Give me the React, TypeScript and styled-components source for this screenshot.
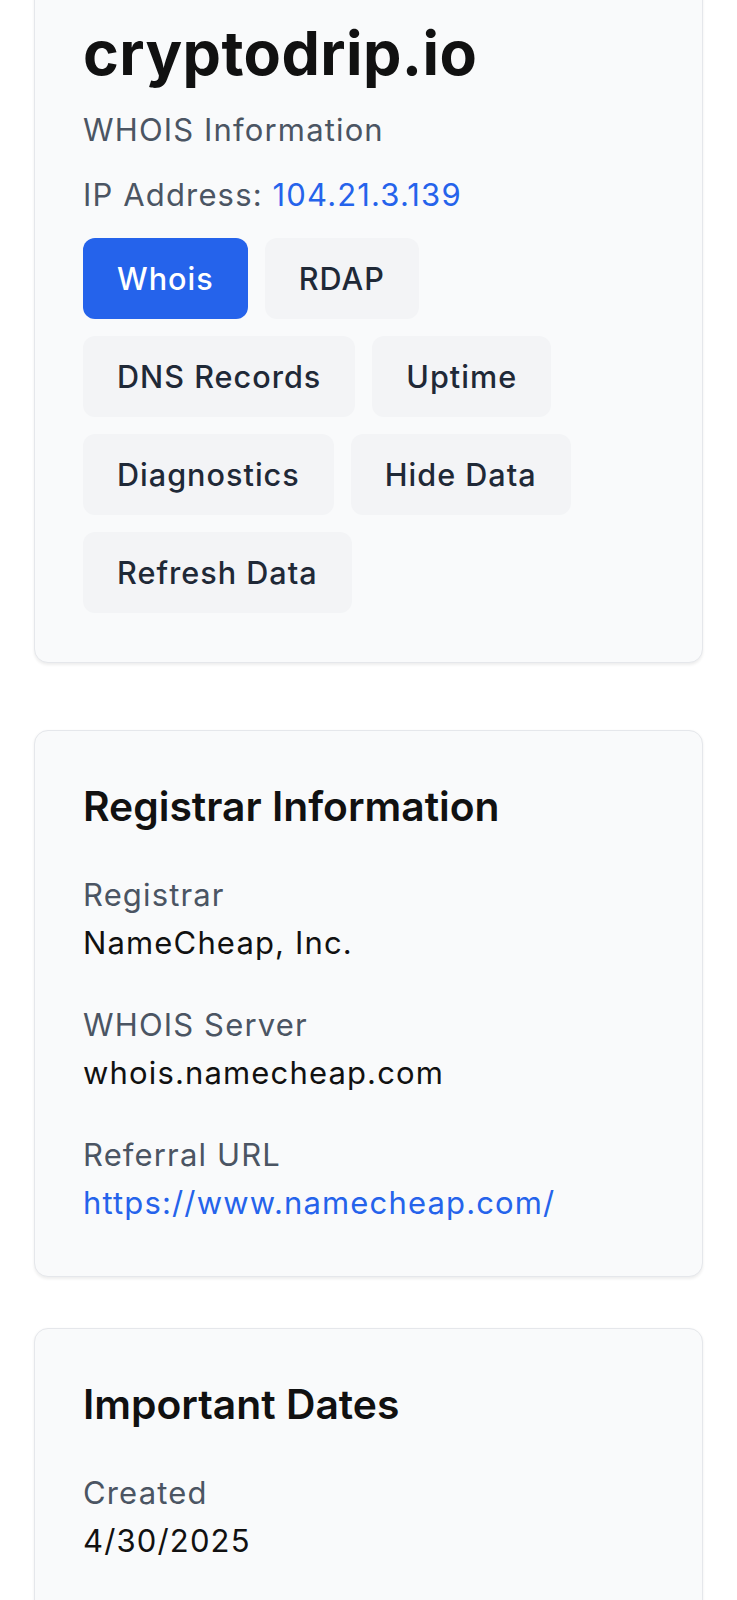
import React from "react";
import styled, { createGlobalStyle } from "styled-components";

const Global = createGlobalStyle`
  html, body {
    margin: 0;
    padding: 0;
    background: #ffffff;
    font-family: Inter, "Noto Sans", "Liberation Sans", sans-serif;
    -webkit-font-smoothing: antialiased;
  }
  * { box-sizing: border-box; }
`;

const Page = styled.main`
  margin-top: -30px;
  padding: 0 34px;
  display: flex;
  flex-direction: column;
`;

const Card = styled.section<{ $gapAfter?: number }>`
  background: #f9fafb;
  border: 1.5px solid #e5e7eb;
  border-radius: 14px;
  padding: 48px 48px 49px;
  box-shadow: 0 1.5px 3px rgba(0, 0, 0, 0.07);
  margin-bottom: ${(p) => p.$gapAfter ?? 0}px;
`;

const Title = styled.h1`
  margin: 0 0 19px;
  font-size: 61px;
  line-height: 68px;
  font-weight: 700;
  color: #111111;
  letter-spacing: 0.4px;
`;

const bodyText = `
  font-size: 31px;
  line-height: 48px;
  letter-spacing: 1.15px;
`;

const Subtitle = styled.p`
  ${bodyText}
  margin: 0 0 17px;
  color: #4b5563;
`;

const IpLine = styled.p`
  ${bodyText}
  margin: 0 0 19px;
  color: #4b5563;
`;

const Link = styled.a`
  color: #2563eb;
  text-decoration: none;
`;

const ButtonRow = styled.div`
  display: flex;
  flex-wrap: wrap;
  gap: 17px;
`;

const TabButton = styled.button<{ $active?: boolean }>`
  font-family: inherit;
  font-size: 30.6px;
  line-height: 47px;
  font-weight: 500;
  letter-spacing: 1px;
  padding: 17px 34px;
  border: none;
  border-radius: 12px;
  background: ${(p) => (p.$active ? "#2563eb" : "#f3f4f6")};
  color: ${(p) => (p.$active ? "#ffffff" : "#1f2937")};
  cursor: pointer;
`;

const SectionTitle = styled.h2`
  margin: 0 0 38px;
  font-size: 40.8px;
  line-height: 54px;
  font-weight: 600;
  color: #111111;
`;

const FieldList = styled.dl`
  margin: 0;
  display: flex;
  flex-direction: column;
  gap: 34px;
`;

const Field = styled.div`
  display: flex;
  flex-direction: column;
`;

const Label = styled.dt`
  ${bodyText}
  color: #4b5563;
`;

const Value = styled.dd`
  ${bodyText}
  margin: 0;
  color: #111111;
`;

const buttons = [
  "Whois",
  "RDAP",
  "DNS Records",
  "Uptime",
  "Diagnostics",
  "Hide Data",
  "Refresh Data",
];

export default function App() {
  return (
    <>
      <Global />
      <Page>
        <Card $gapAfter={67}>
          <Title>cryptodrip.io</Title>
          <Subtitle>WHOIS Information</Subtitle>
          <IpLine>
            IP Address: <Link href="#">104.21.3.139</Link>
          </IpLine>
          <ButtonRow>
            {buttons.map((b, i) => (
              <TabButton key={b} $active={i === 0}>
                {b}
              </TabButton>
            ))}
          </ButtonRow>
        </Card>

        <Card $gapAfter={51}>
          <SectionTitle>Registrar Information</SectionTitle>
          <FieldList>
            <Field>
              <Label>Registrar</Label>
              <Value>NameCheap, Inc.</Value>
            </Field>
            <Field>
              <Label>WHOIS Server</Label>
              <Value>whois.namecheap.com</Value>
            </Field>
            <Field>
              <Label>Referral URL</Label>
              <Value>
                <Link href="#">https://www.namecheap.com/</Link>
              </Value>
            </Field>
          </FieldList>
        </Card>

        <Card>
          <SectionTitle>Important Dates</SectionTitle>
          <FieldList>
            <Field>
              <Label>Created</Label>
              <Value>4/30/2025</Value>
            </Field>
            <Field>
              <Label>Updated</Label>
              <Value>4/30/2025</Value>
            </Field>
            <Field>
              <Label>Expires</Label>
              <Value>4/30/2026</Value>
            </Field>
          </FieldList>
        </Card>
      </Page>
    </>
  );
}
